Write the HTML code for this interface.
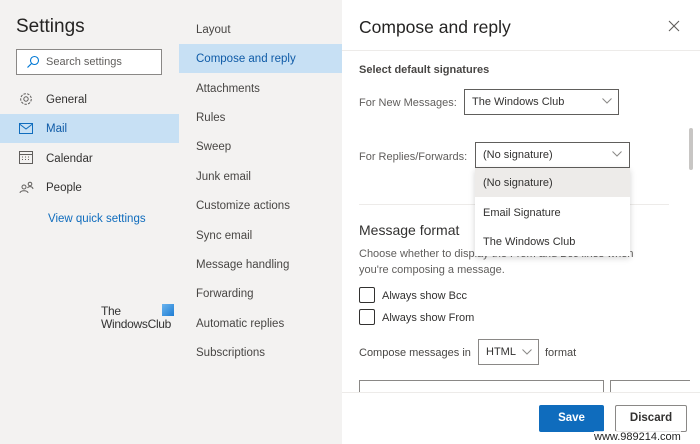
<!DOCTYPE html>
<html><head><meta charset="utf-8"><style>
*{margin:0;padding:0;box-sizing:border-box}
body{width:700px;height:444px;overflow:hidden;background:#f3f2f1;font-family:"Liberation Sans",sans-serif;color:#323130;position:relative}
.a{position:absolute;white-space:nowrap}
.s{font-size:11px}
.nav{font-size:11.5px;color:#323130}
</style></head><body>
<div class="a" style="left:16px;top:16px;font-size:19px;color:#252423">Settings</div>
<div class="a" style="left:16px;top:49px;width:146px;height:26px;border:1px solid #8a8886;background:#fff"></div>
<svg class="a" style="left:26px;top:55px" width="14" height="14" viewBox="0 0 14 14"><circle cx="8.5" cy="5.5" r="4" fill="none" stroke="#0078d4" stroke-width="1.1"/><path d="M5.5 8.5L1.5 12.5" stroke="#0078d4" stroke-width="1.2"/></svg>
<div class="a s" style="left:46px;top:56px;color:#605e5c">Search settings</div>
<svg class="a" style="left:19px;top:92px" width="14" height="14" viewBox="0 0 14 14"><circle cx="7" cy="7" r="2.2" fill="none" stroke="#605e5c"/><circle cx="7" cy="7" r="5.3" fill="none" stroke="#605e5c" stroke-dasharray="2.5 1.2"/></svg>
<div class="a nav" style="left:46px;top:94px">General</div>
<div class="a" style="left:0;top:114px;width:179px;height:29px;background:#c7e0f4"></div>
<svg class="a" style="left:19px;top:123px" width="14" height="11" viewBox="0 0 14 11"><rect x="0.5" y="0.5" width="13" height="10" fill="none" stroke="#0f6cbd"/><path d="M0.5 1L7 6L13.5 1" fill="none" stroke="#0f6cbd"/></svg>
<div class="a nav" style="left:46px;top:123px;color:#0f5ba7">Mail</div>
<svg class="a" style="left:19px;top:151px" width="14" height="13" viewBox="0 0 14 13"><rect x="0.5" y="0.5" width="13" height="12" fill="none" stroke="#605e5c"/><path d="M0.5 3.5H13.5" stroke="#605e5c"/><path d="M3 6h1M6 6h1M9 6h1M3 8.5h1M6 8.5h1M9 8.5h1" stroke="#605e5c"/></svg>
<div class="a nav" style="left:46px;top:153px">Calendar</div>
<svg class="a" style="left:19px;top:181px" width="15" height="13" viewBox="0 0 15 13"><circle cx="5" cy="6" r="2" fill="none" stroke="#605e5c"/><path d="M1 12c0-3 8-3 8 0" fill="none" stroke="#605e5c"/><circle cx="11" cy="3" r="1.8" fill="none" stroke="#605e5c"/><path d="M8.5 7c1-2 5-2 5.5 1" fill="none" stroke="#605e5c"/></svg>
<div class="a nav" style="left:46px;top:182px">People</div>
<div class="a nav" style="left:48px;top:213px;color:#0f6cbd">View quick settings</div>
<div class="a" style="left:101px;top:305px;font-size:12px;line-height:13px;color:#333;letter-spacing:-0.3px">The<br>WindowsClub</div>
<div class="a" style="left:162px;top:304px;width:12px;height:12px;background:linear-gradient(135deg,#6ab4ee,#1e7dd3)"></div>

<div class="a" style="left:179px;top:0;width:163px;height:444px;background:#f3f2f1"></div>
<div class="a" style="left:179px;top:44px;width:163px;height:29px;background:#c7e0f4"></div>
<div class="a nav" style="left:196px;top:24px;color:#484644">Layout</div>
<div class="a nav" style="left:196px;top:53px;color:#0f5ba7">Compose and reply</div>
<div class="a nav" style="left:196px;top:83px;color:#484644">Attachments</div>
<div class="a nav" style="left:196px;top:112px;color:#484644">Rules</div>
<div class="a nav" style="left:196px;top:141px;color:#484644">Sweep</div>
<div class="a nav" style="left:196px;top:171px;color:#484644">Junk email</div>
<div class="a nav" style="left:196px;top:200px;color:#484644">Customize actions</div>
<div class="a nav" style="left:196px;top:230px;color:#484644">Sync email</div>
<div class="a nav" style="left:196px;top:259px;color:#484644">Message handling</div>
<div class="a nav" style="left:196px;top:288px;color:#484644">Forwarding</div>
<div class="a nav" style="left:196px;top:318px;color:#484644">Automatic replies</div>
<div class="a nav" style="left:196px;top:347px;color:#484644">Subscriptions</div>

<div class="a" style="left:342px;top:0;width:358px;height:444px;background:#fff"></div>
<div class="a" style="left:359px;top:17px;font-size:17.5px;color:#252423">Compose and reply</div>
<svg class="a" style="left:668px;top:20px" width="12" height="12" viewBox="0 0 12 12"><path d="M1 1L11 11M11 1L1 11" stroke="#605e5c" stroke-width="1.1"/></svg>
<div class="a" style="left:342px;top:50px;width:358px;height:1px;background:#edebe9"></div>
<div class="a" style="left:359px;top:64px;font-size:11px;font-weight:bold;color:#484644">Select default signatures</div>
<div class="a s" style="left:359px;top:97px;color:#605e5c">For New Messages:</div>
<div class="a" style="left:464px;top:89px;width:155px;height:26px;border:1px solid #605e5c"></div>
<div class="a s" style="left:472px;top:96px">The Windows Club</div>
<svg class="a" style="left:602px;top:98px" width="10" height="6" viewBox="0 0 10 6"><path d="M0.5 0.5L5 5L9.5 0.5" fill="none" stroke="#8a8886"/></svg>
<div class="a s" style="left:359px;top:151px;color:#605e5c">For Replies/Forwards:</div>
<div class="a" style="left:475px;top:142px;width:155px;height:26px;border:1px solid #605e5c"></div>
<div class="a s" style="left:483px;top:149px">(No signature)</div>
<svg class="a" style="left:612px;top:151px" width="10" height="6" viewBox="0 0 10 6"><path d="M0.5 0.5L5 5L9.5 0.5" fill="none" stroke="#8a8886"/></svg>
<div class="a" style="left:689px;top:128px;width:4px;height:42px;background:#c8c6c4;border-radius:2px"></div>
<div class="a" style="left:359px;top:204px;width:310px;height:1px;background:#edebe9"></div>
<div class="a" style="left:359px;top:222px;font-size:14px;color:#323130">Message format</div>
<div class="a s" style="left:359px;top:246px;color:#605e5c;line-height:16px">Choose whether to display the From and Bcc lines when<br>you're composing a message.</div>
<div class="a" style="left:359px;top:287px;width:16px;height:16px;border:1px solid #323130;border-radius:2px"></div>
<div class="a s" style="left:382px;top:290px">Always show Bcc</div>
<div class="a" style="left:359px;top:309px;width:16px;height:16px;border:1px solid #323130;border-radius:2px"></div>
<div class="a s" style="left:382px;top:312px">Always show From</div>
<div class="a s" style="left:359px;top:347px;color:#484644">Compose messages in</div>
<div class="a" style="left:478px;top:339px;width:61px;height:26px;border:1px solid #8a8886"></div>
<div class="a s" style="left:486px;top:346px">HTML</div>
<svg class="a" style="left:522px;top:349px" width="10" height="6" viewBox="0 0 10 6"><path d="M0.5 0.5L5 5L9.5 0.5" fill="none" stroke="#8a8886"/></svg>
<div class="a s" style="left:545px;top:347px;color:#484644">format</div>
<div class="a" style="left:359px;top:380px;width:245px;height:20px;border:1px solid #8a8886;border-bottom:none"></div>
<div class="a" style="left:610px;top:380px;width:80px;height:20px;border:1px solid #8a8886;border-bottom:none;border-right:none"></div>
<div class="a" style="left:342px;top:392px;width:358px;height:52px;background:#fff;border-top:1px solid #edebe9"></div>
<div class="a" style="left:539px;top:405px;width:65px;height:27px;background:#0f6cbd;border-radius:2px;color:#fff;font-size:11.5px;font-weight:bold;text-align:center;line-height:27px">Save</div>
<div class="a" style="left:615px;top:405px;width:72px;height:27px;border:1px solid #8a8886;border-radius:2px;background:#fff;font-size:11.5px;font-weight:bold;text-align:center;line-height:25px">Discard</div>
<div class="a" style="left:594px;top:431px;font-size:11px;color:#222;background:rgba(255,255,255,.8)">www.989214.com</div>

<div class="a" style="left:475px;top:168px;width:155px;height:88px;background:#fff;box-shadow:0 2px 6px rgba(0,0,0,.18)"></div>
<div class="a" style="left:475px;top:168px;width:155px;height:29px;background:#edebe9"></div>
<div class="a s" style="left:483px;top:177px">(No signature)</div>
<div class="a s" style="left:483px;top:207px">Email Signature</div>
<div class="a s" style="left:483px;top:236px">The Windows Club</div>
</body></html>
